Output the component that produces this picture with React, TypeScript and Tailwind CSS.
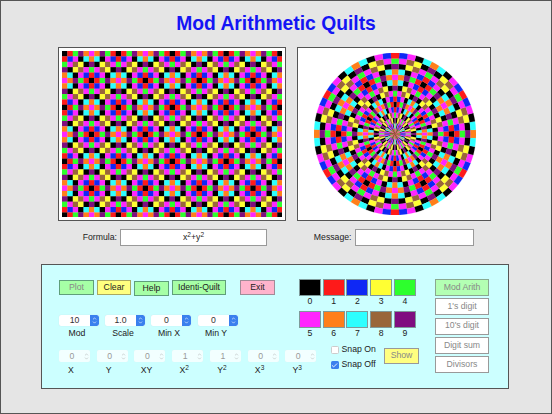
import { Check, ChevronDown, ChevronUp } from "lucide-react"

const COLORS = ["#000000", "#fe1a1a", "#0f28f5", "#ffff33", "#2dff2d", "#ff26ff", "#ff7f1a", "#2dffff", "#99663a", "#800d80"]

const FONT = "font-['Liberation_Sans',Arial,sans-serif]"

function value(x: number, y: number) {
    return (x * x + y * y) % 10
}

function RectQuilt() {
    const cells = []
    for (let y = 0; y < 31; y++) {
        for (let x = 0; x < 41; x++) {
            // slight overlap so no white seams show between cells
            const w = x < 40 ? 1.04 : 1
            const h = y < 30 ? 1.04 : 1
            cells.push(<rect key={x + "-" + y} x={x} y={y} width={w} height={h} fill={COLORS[value(x, y)]} />)
        }
    }
    return (
        <svg viewBox="0 0 41 31" className="block h-[166.8px] w-[220.6px]">
            {cells}
        </svg>
    )
}

function sector(k: number, s: number) {
    const r1 = k * 5.4
    const r2 = (k + 1) * 5.4
    const a1 = ((s - 0.5) * 6 * Math.PI) / 180
    const a2 = ((s + 0.5) * 6 * Math.PI) / 180
    const p = (r: number, a: number) => (81 + r * Math.cos(a)).toFixed(2) + " " + (81 - r * Math.sin(a)).toFixed(2)
    return `M${p(r1, a1)}L${p(r2, a1)}A${r2} ${r2} 0 0 0 ${p(r2, a2)}L${p(r1, a2)}A${r1} ${r1} 0 0 1 ${p(r1, a1)}Z`
}

function PolarQuilt() {
    const cells = []
    for (let k = 0; k < 15; k++) {
        for (let s = 0; s < 60; s++) {
            const c = COLORS[value(k, s)]
            cells.push(<path key={k + "-" + s} d={sector(k, s)} fill={c} stroke={c} strokeWidth={0.15} />)
        }
    }
    return (
        <svg viewBox="0 0 162 162" className="block h-[162px] w-[162px]">
            {cells}
        </svg>
    )
}

function Btn({ label, className }: { label: string; className: string }) {
    return (
        <div className={"flex items-center justify-center border-[1.5px] text-[8.7px] " + className}>
            {label}
        </div>
    )
}

function SelectBox({ text }: { text: string }) {
    return (
        <div className="flex h-[11px] w-[40px] overflow-hidden rounded-[2px] bg-white shadow-[0_0_1px_#b8d8e0]">
            <div className="flex-1 text-center text-[8.7px] leading-[11px] text-[#333]">{text}</div>
            <div className="flex w-[9px] flex-col items-center justify-center rounded-r-[2px] bg-[#3a80ee] text-white">
                <ChevronUp size={5} strokeWidth={3} className="-mb-px" />
                <ChevronDown size={5} strokeWidth={3} />
            </div>
        </div>
    )
}

function NumberBox({ text }: { text: string }) {
    return (
        <div className="flex h-[12px] w-[31px] items-center rounded-[2px] bg-[#f2ffff] shadow-[0_0_1px_#d8eeee]">
            <div className="flex-1 pl-[3px] text-center text-[8.7px] leading-[12px] text-[#999]">{text}</div>
            <div className="flex w-[8px] flex-col items-center text-[#999]">
                <ChevronUp size={5} strokeWidth={2} className="-mb-px" />
                <ChevronDown size={5} strokeWidth={2} />
            </div>
        </div>
    )
}

const selects = [
    { text: "10", label: "Mod", cls: "mr-[6px]" },
    { text: "1.0", label: "Scale", cls: "mr-[6px]" },
    { text: "0", label: "Min X", cls: "mr-[7px]" },
    { text: "0", label: "Min Y", cls: "" },
]

const numbers = [
    { text: "0", label: "X" },
    { text: "0", label: "Y" },
    { text: "0", label: "XY" },
    { text: "1", label: "X", sup: "2" },
    { text: "1", label: "Y", sup: "2" },
    { text: "0", label: "X", sup: "3" },
    { text: "0", label: "Y", sup: "3" },
]

export default function App() {
    return (
        <div className={"box-border h-[414px] w-[552px] overflow-hidden border border-[#555] bg-[#e5e5e5] " + FONT}>
            <h1 className="h-[46px] pt-[12px] text-center text-[19.3px] leading-[22px] font-bold text-[#1414f5]">
                Mod Arithmetic Quilts
            </h1>

            {/* QUILTS */}
            <div className="flex pl-[57px]">
                <div className="box-border flex h-[174px] w-[228px] items-center justify-center border-[1.5px] border-[#555] bg-white">
                    <RectQuilt />
                </div>
                <div className="ml-[11px] box-border flex h-[174px] w-[194px] items-center justify-center border-[1.5px] border-[#555] bg-white pl-px">
                    <PolarQuilt />
                </div>
            </div>

            {/* FORMULA */}
            <div className="mt-[8px] flex h-[17px] items-center text-[8.7px] text-[#222]">
                <div className="w-[116px] text-right">Formula:</div>
                <div className="ml-[3px] flex h-[17px] w-[147px] items-center justify-center border border-[#999] bg-white text-[#222]">
                    <span>
                        x<sup>2</sup>+y<sup>2</sup>
                    </span>
                </div>
                <div className="w-[84.5px] text-right">Message:</div>
                <div className="ml-[3px] h-[17px] w-[119px] border border-[#999] bg-white" />
            </div>

            {/* CONTROLS */}
            <div className="mt-[18px] ml-[40px] box-border flex h-[125px] w-[468px] border border-[#555] bg-[#ccffff] pt-[14px] pl-[17px] text-[8.7px] text-[#222]">
                <div className="w-[376px]">
                    <div className="flex">
                        <div className="w-[240px]">
                            <div className="mt-px flex items-start">
                                <Btn label="Plot" className="h-[15px] w-[35px] border-[#5f9f7a] bg-[#a6ffa6] text-[#888]" />
                                <Btn label="Clear" className="ml-[3px] h-[15px] w-[34px] border-[#aaa860] bg-[#ffff80]" />
                                <Btn label="Help" className="mt-px ml-[3px] h-[15px] w-[35px] border-[#5f9f7a] bg-[#a6ffa6]" />
                                <Btn label="Identi-Quilt" className="ml-[3px] h-[15px] w-[54px] border-[#5f9f7a] bg-[#a6ffa6]" />
                                <Btn label="Exit" className="ml-[14px] h-[15px] w-[35px] border-[#a08c98] bg-[#ffb3cc]" />
                            </div>
                            <div className="mt-[19px] flex">
                                {selects.map((s) => (
                                    <div key={s.label} className={"w-[40px] " + s.cls}>
                                        <SelectBox text={s.text} />
                                        <div className="mt-[2px] pr-[4px] text-center leading-[10px]">{s.label}</div>
                                    </div>
                                ))}
                            </div>
                        </div>
                        <div className="grid w-[118.5px] grid-cols-5">
                            {COLORS.map((c, i) => (
                                <div key={c} className={i > 4 ? "mt-[5px]" : ""}>
                                    <div className="h-[17px] w-[22px] border-[1.5px] border-[#7f9a9a]" style={{ backgroundColor: c }} />
                                    <div className="w-[22px] text-center leading-[10px]">{i}</div>
                                </div>
                            ))}
                        </div>
                    </div>

                    <div className="mt-[12px] flex">
                        <div className="grid w-[264px] grid-cols-7">
                            {numbers.map((n, i) => (
                                <div key={i} className="w-[31px]">
                                    <NumberBox text={n.text} />
                                    <div className="mt-[3px] pr-[7px] text-center leading-[10px]">
                                        {n.label}
                                        {n.sup && <sup>{n.sup}</sup>}
                                    </div>
                                </div>
                            ))}
                        </div>
                        <div className="-mt-[4px] ml-[8px] w-[53px]">
                            <div className="flex h-[8px] items-center gap-[3px]">
                                <div className="h-[8px] w-[7.5px] rounded-[1.5px] border border-[#ccc] bg-white" />
                                <span className="text-[8.7px]">Snap On</span>
                            </div>
                            <div className="mt-[7px] flex h-[8px] items-center gap-[3px]">
                                <div className="flex h-[8px] w-[7.5px] items-center justify-center rounded-[1.5px] bg-[#3a80ee] text-white">
                                    <Check size={7} strokeWidth={3} />
                                </div>
                                <span className="text-[8.7px]">Snap Off</span>
                            </div>
                        </div>
                        <Btn label="Show" className="-mt-[2px] h-[16px] w-[35px] border-[#999] bg-[#ffff80] text-[#888]" />
                    </div>
                </div>

                <div className="flex w-[54px] flex-col gap-[2.25px]">
                    <Btn label="Mod Arith" className="h-[17px] w-[54px] border-[#8aa890] bg-[#b3ffb3] text-[#888]" />
                    <Btn label="1's digit" className="h-[17px] w-[54px] border-[#999] bg-white text-[#888]" />
                    <Btn label="10's digit" className="h-[17px] w-[54px] border-[#999] bg-white text-[#888]" />
                    <Btn label="Digit sum" className="h-[17px] w-[54px] border-[#999] bg-white text-[#888]" />
                    <Btn label="Divisors" className="h-[17px] w-[54px] border-[#999] bg-white text-[#888]" />
                </div>
            </div>
        </div>
    )
}
